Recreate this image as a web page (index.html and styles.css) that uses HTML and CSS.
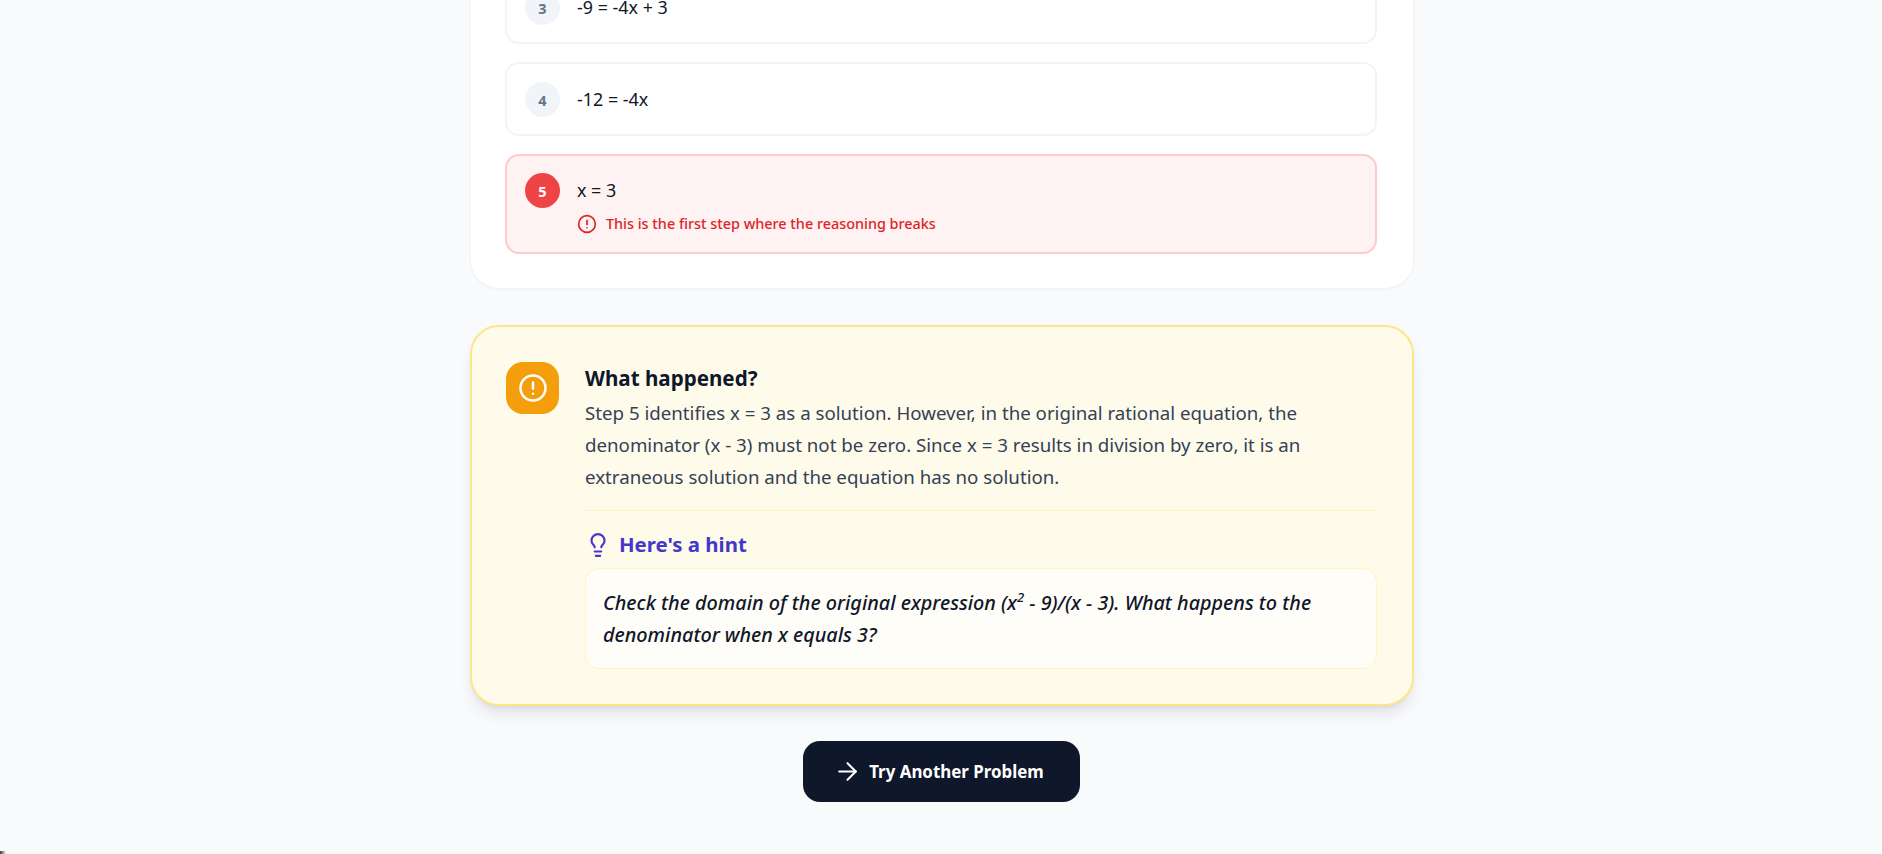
FILE: index.html
```html
<!DOCTYPE html>
<html lang="en">
<head>
<meta charset="utf-8">
<title>Try Another Problem</title>
<link rel="stylesheet" href="styles.css">
</head>
<body>
<main class="page">
  <section class="card">
    <div class="step">
      <span class="num">3</span>
      <div class="step-body"><p class="eq">-9 = -4x + 3</p></div>
    </div>
    <div class="step">
      <span class="num">4</span>
      <div class="step-body"><p class="eq">-12 = -4x</p></div>
    </div>
    <div class="step step-bad">
      <span class="num num-bad">5</span>
      <div class="step-body">
        <p class="eq">x = 3</p>
        <p class="err">
          <svg class="err-icon" viewBox="0 0 24 24" fill="none" stroke="currentColor" stroke-width="2" stroke-linecap="round"><circle cx="12" cy="12" r="10"/><path d="M12 7.500v5M12 16.500h.01"/></svg>
          This is the first step where the reasoning breaks
        </p>
      </div>
    </div>
  </section>

  <section class="card-amber">
    <div class="amber-icon">
      <svg viewBox="0 0 24 24" fill="none" stroke="currentColor" stroke-width="2" stroke-linecap="round"><circle cx="12" cy="12" r="10"/><path d="M12 7.500v5M12 16.500h.01"/></svg>
    </div>
    <div class="amber-body">
      <h2 class="title">What happened?</h2>
      <p class="desc">Step 5 identifies x = 3 as a solution. However, in the original rational equation, the denominator (x - 3) must not be zero. Since x = 3 results in division by zero, it is an extraneous solution and the equation has no solution.</p>
      <div class="hint">
        <h3 class="hint-title">
          <svg class="bulb" viewBox="0 0 24 24" fill="none" stroke="currentColor" stroke-width="2" stroke-linecap="round" stroke-linejoin="round"><path d="M15 14c.2-1 .7-1.700 1.500-2.500 1-.9 1.500-2.200 1.500-3.500A6 6 0 0 0 6 8c0 1 .2 2.200 1.500 3.500.7.7 1.300 1.500 1.500 2.500"/><path d="M9 18h6"/><path d="M10 22h4"/></svg>
          Here's a hint
        </h3>
        <div class="hint-box">Check the domain of the original expression (x<sup class="sq">2</sup> - 9)/(x - 3). What happens to the denominator when x equals 3?</div>
      </div>
    </div>
  </section>

  <button class="cta" type="button">
    <svg class="arrow" viewBox="4 4 16 16" fill="none" stroke="currentColor" stroke-width="1.700" stroke-linecap="round" stroke-linejoin="round"><path d="M5 12h14"/><path d="m12 5 7 7-7 7"/></svg>
    Try Another Problem
  </button>
</main>
<div class="corner"></div>
</body>
</html>
```
FILE: styles.css
```css
* { box-sizing: border-box; }
html, body { margin: 0; height: 100%; overflow: hidden; }
body {
  background: #f8fafc;
  color: #0f172a;
  font-family: "Noto Sans", "Open Sans", sans-serif;
  padding-left: 2px;
}
.page {
  height: 854px;
  width: 944px;
  margin: 0 auto;
  display: flex;
  flex-direction: column;
  justify-content: flex-end;
  align-items: stretch;
  padding-bottom: 52px;
}
.card {
  flex: none;
  background: #fff;
  border: 1px solid #f1f5f9;
  border-top: 0;
  border-radius: 0 0 29px 29px;
  padding: 0 36px 34px 34px;
  display: flex;
  flex-direction: column;
  gap: 18px;
  box-shadow: 0 1px 2px rgba(15, 23, 42, .03);
}
.step {
  display: flex;
  gap: 17px;
  align-items: flex-start;
  border: 2px solid #f1f5f9;
  border-radius: 14px;
  padding: 18px 18px 17px;
  background: #fff;
}
.num {
  flex: none;
  width: 35px;
  height: 35px;
  border-radius: 50%;
  background: #f1f5f9;
  color: #64748b;
  font-size: 14.500px;
  font-weight: 700;
  display: flex;
  align-items: center;
  justify-content: center;
}
.num-bad { background: #ef4444; color: #fff; }
.step-bad { background: #fef2f2; border-color: #fecaca; padding: 17px 18px 13px; }
.step-body { min-width: 0; }
.eq { margin: 0; font-size: 17.900px; line-height: 35px; }
.err {
  margin: 1px 0 0;
  display: flex;
  align-items: center;
  gap: 9px;
  color: #dc2626;
  font-size: 14.400px;
  font-weight: 500;
  line-height: 30px;
}
.err-icon { width: 20px; height: 20px; flex: none; }
.card-amber {
  flex: none;
  margin-top: 36px;
  height: 381px;
  display: flex;
  gap: 26px;
  background: #fffbeb;
  border: 2px solid #fde68a;
  border-radius: 29px;
  padding: 35px 35px 35px 34px;
  box-shadow: 0 10px 15px -3px rgba(15, 23, 42, .1), 0 4px 6px -4px rgba(15, 23, 42, .1);
}
.amber-icon {
  flex: none;
  width: 53px;
  height: 52px;
  border-radius: 17px;
  background: #f59e0b;
  color: #fff;
  display: flex;
  align-items: center;
  justify-content: center;
}
.amber-icon svg { width: 30px; height: 30px; }
.amber-body { flex: 1; min-width: 0; }
.title { margin: 2px 0 0; font-size: 20.600px; font-weight: 700; line-height: 28px; color: #0f172a; }
.desc { margin: 5px 0 0; font-size: 18.700px; line-height: 32px; color: #334155; }
.hint { margin-top: 17px; border-top: 1px solid #fef3c7; padding-top: 19px; }
.hint-title {
  margin: 0;
  display: flex;
  align-items: center;
  gap: 8px;
  font-size: 20.400px;
  font-weight: 700;
  line-height: 29px;
  color: #4338ca;
}
.bulb { width: 26px; height: 26px; flex: none; }
.hint-box {
  margin-top: 9px;
  height: 101px;
  background: rgba(255, 255, 255, .6);
  border: 1px solid #fef3c7;
  border-radius: 14px;
  padding: 18px 17px;
  font-size: 19.800px;
  font-style: italic;
  font-weight: 500;
  line-height: 32px;
  color: #0f172a;
}
.sq { font-size: 13px; line-height: 0; }
.cta {
  flex: none;
  align-self: center;
  margin: 35px 2px 0 0;
  width: 277px;
  height: 61px;
  display: flex;
  align-items: center;
  justify-content: center;
  gap: 12px;
  border: 0;
  border-radius: 17px;
  background: #0f172a;
  color: #fff;
  font-family: inherit;
  font-size: 16.900px;
  font-weight: 700;
}
.arrow { width: 19px; height: 19px; flex: none; }
.corner {
  position: fixed;
  left: 0;
  bottom: 0;
  width: 6px;
  height: 3px;
  background: linear-gradient(to right, #333, rgba(51, 51, 51, 0));
}
```
